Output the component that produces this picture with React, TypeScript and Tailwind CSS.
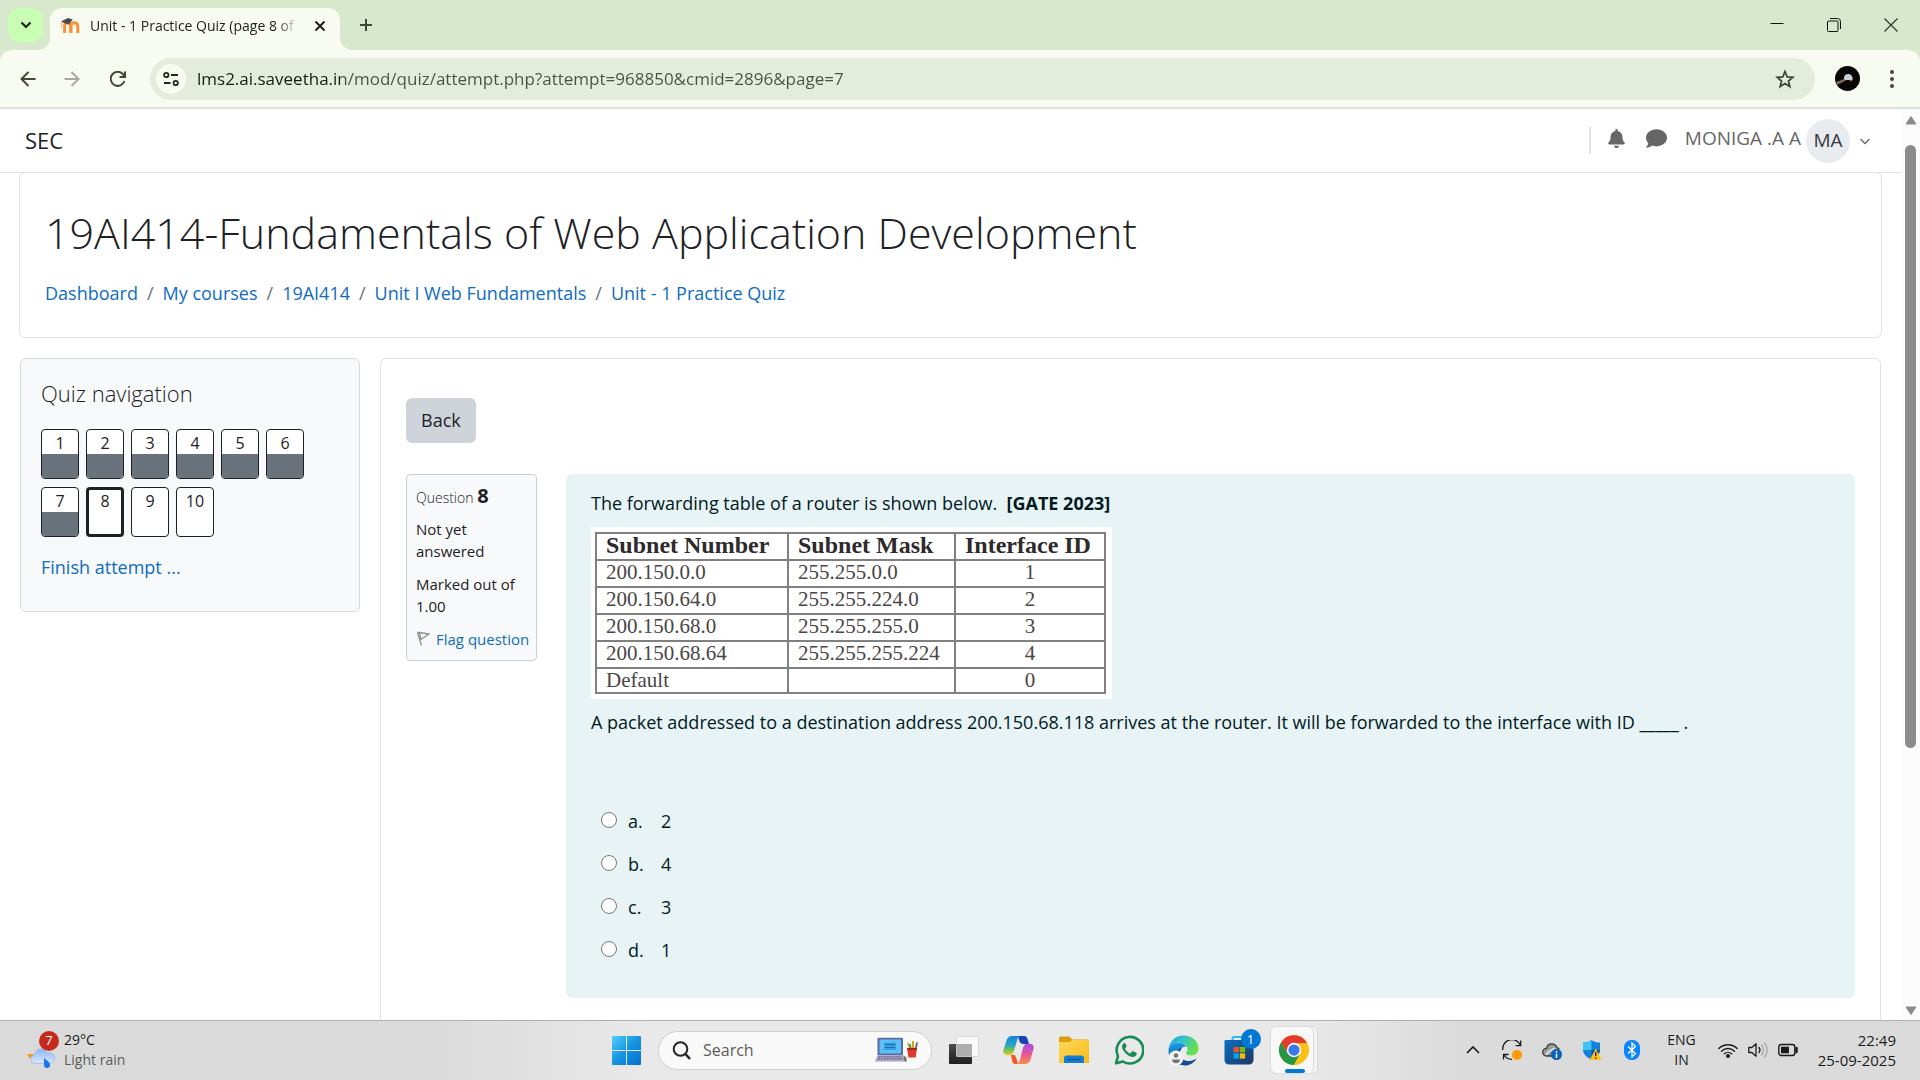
import React, { useState } from "react";
import { FaBell, FaComment } from "react-icons/fa";

const crumbs = ["Dashboard", "My courses", "19AI414", "Unit I Web Fundamentals", "Unit - 1 Practice Quiz"];

const questions = Array.from({ length: 10 }, (_, i) => ({ n: i + 1, saved: i < 7, current: i === 7 }));

const routes = [
  ["200.150.0.0", "255.255.0.0", "1"],
  ["200.150.64.0", "255.255.224.0", "2"],
  ["200.150.68.0", "255.255.255.0", "3"],
  ["200.150.68.64", "255.255.255.224", "4"],
  ["Default", "", "0"],
];

const answers = [
  ["a", "2"],
  ["b", "4"],
  ["c", "3"],
  ["d", "1"],
];

function MoodleIcon() {
  return (
    <svg className="h-5 w-5 shrink-0" viewBox="0 0 20 20">
      <path d="M4.600 17V10c0-2.200 1.200-3.200 3-3.200s3 1 3 3.200v7M11 17v-7c0-2.200 1.400-3.200 3.200-3.200s3.600 1 3.600 3.200v7" fill="none" stroke="#fa9136" strokeWidth="3" />
      <path d="M1 5.400 7.800 2l5 1.600L8.600 8.400 5 7.200z" fill="#4a4a48" />
      <path d="M1.600 5.600v6" stroke="#f3b27a" strokeWidth="1" />
    </svg>
  );
}

function TabStrip() {
  return (
    <div className="flex h-[50px] shrink-0 items-start bg-[#d8e8cc] pl-2">
      <button aria-label="Search tabs" className="mt-2 flex h-[34px] w-[35px] items-center justify-center rounded-xl bg-[#c8ffb4] text-[#182612]">
        <svg className="h-3 w-3" viewBox="0 0 12 12" fill="none" stroke="currentColor" strokeWidth="2.200"><path d="M1.500 3.500 6 8l4.500-4.500" /></svg>
      </button>
      <div className="relative ml-[7px] mt-2 flex h-[42px] w-[290px] items-center rounded-t-xl bg-[#f8fbf1] pb-[7px] pl-[10px] pr-[10px]">
        <svg className="absolute -left-3 bottom-0 h-3 w-3" viewBox="0 0 12 12"><path d="M12 0v12H0A12 12 0 0 0 12 0" fill="#f8fbf1" /></svg>
        <svg className="absolute -right-3 bottom-0 h-3 w-3" viewBox="0 0 12 12"><path d="M0 0v12h12A12 12 0 0 1 0 0" fill="#f8fbf1" /></svg>
        <MoodleIcon />
        <span className="ml-[10px] min-w-0 flex-1 whitespace-nowrap text-sm text-[#1c2118] [mask-image:linear-gradient(to_right,black_90%,transparent_100%)]">
          Unit - 1 Practice Quiz (page 8 of
        </span>
        <button aria-label="Close tab" className="ml-3 flex h-6 w-5 items-center justify-center text-[#1c2118]">
          <svg className="h-3 w-3" viewBox="0 0 12 12" stroke="currentColor" strokeWidth="2"><path d="m1.500 1.500 9 9M10.500 1.500l-9 9" /></svg>
        </button>
      </div>
      <button aria-label="New tab" className="ml-3 mt-2 flex h-[34px] w-7 items-center justify-center text-[#3c4a37]">
        <svg className="h-[14px] w-[14px]" viewBox="0 0 14 14" stroke="currentColor" strokeWidth="2"><path d="M7 1v12M1 7h12" /></svg>
      </button>
      <div className="ml-auto flex h-[50px]">
        <button aria-label="Minimize" className="flex w-[57px] items-center justify-center pb-1">
          <svg className="h-[14px] w-[14px]" viewBox="0 0 14 14" stroke="#111"><path d="M.5 7.500h13" /></svg>
        </button>
        <button aria-label="Restore" className="flex w-[57px] items-center justify-center pb-px">
          <svg className="h-[14px] w-[14px]" viewBox="0 0 14 14" fill="none" stroke="#111"><rect x=".5" y="3" width="10.500" height="10.500" rx="1" /><path d="M3 .5h7.500a3 3 0 0 1 3 3V11" /></svg>
        </button>
        <button aria-label="Close window" className="flex w-[58px] items-center justify-center">
          <svg className="h-[14px] w-[14px]" viewBox="0 0 14 14" stroke="#333" strokeWidth="1.200"><path d="m.5.5 13 13M13.500.5l-13 13" /></svg>
        </button>
      </div>
    </div>
  );
}

function Toolbar() {
  return (
    <div className="shrink-0 bg-[#d8e8cc]">
      <div className="flex h-[59px] items-center rounded-t-xl border-b-2 border-[#dfe2d6] bg-[#f8fbf1]">
        <button aria-label="Back one page" className="ml-4 flex h-8 w-6 items-center justify-center text-[#3c4a37]">
          <svg className="h-4 w-4" viewBox="0 0 16 16" fill="none" stroke="currentColor" strokeWidth="2"><path d="M15.500 8H2M8.500 1 1.500 8l7 7" /></svg>
        </button>
        <button aria-label="Forward" className="ml-5 flex h-8 w-6 items-center justify-center text-[#a5ab9f]">
          <svg className="h-4 w-4" viewBox="0 0 16 16" fill="none" stroke="currentColor" strokeWidth="2"><path d="M.5 8H14M7.500 1l7 7-7 7" /></svg>
        </button>
        <button aria-label="Reload" className="ml-[22px] flex h-8 w-6 items-center justify-center text-[#3c4a37]">
          <svg className="h-4 w-4" viewBox="0 0 16 16" fill="none" stroke="currentColor" strokeWidth="2"><path d="M14.400 10A7 7 0 1 1 12.800 3L14.500 5" /><path d="M15 .5v5.500H9.500" /></svg>
        </button>
        <div className="ml-[20px] flex h-[42px] min-w-0 flex-1 items-center rounded-full bg-[#e4eddb] pl-[6px] pr-5">
          <button aria-label="View site information" className="flex h-[30px] w-[30px] shrink-0 items-center justify-center rounded-full bg-[#f8fbf1]">
            <svg className="h-4 w-4" viewBox="0 0 16 16" fill="none" stroke="#1f2a1b" strokeWidth="1.800"><circle cx="3.300" cy="4" r="2.200" /><path d="M8 4h7M1 12h6.500" /><circle cx="12.700" cy="12" r="2.200" /></svg>
          </button>
          <input
            aria-label="Address"
            defaultValue="lms2.ai.saveetha.in/mod/quiz/attempt.php?attempt=968850&cmid=2896&page=7"
            className="ml-[11px] min-w-0 flex-1 bg-[linear-gradient(to_right,#171c14_143px,#485244_143px)] bg-clip-text pt-px text-[17px] text-transparent caret-black outline-none"
          />
          <button aria-label="Bookmark this tab" className="text-[#3c4a37]">
            <svg className="h-5 w-5" viewBox="0 0 20 20" fill="none" stroke="currentColor" strokeWidth="1.800"><path d="m10 2.500 2.200 5.300 5.600.5-4.300 3.700 1.300 5.500L10 14.600l-4.800 2.900 1.300-5.500-4.300-3.700 5.600-.5z" /></svg>
          </button>
        </div>
        <button aria-label="Profile" className="ml-5">
          <svg className="h-[25px] w-[25px]" viewBox="0 0 25 25"><circle cx="12.500" cy="12.500" r="12.500" fill="#080606" /><path d="M9 14c-.5-3 .8-6 4-6s5 2.500 4.500 6z" fill="#c9d0d8" /><path d="m1 16 8-3 2 1.500L2 19z" fill="#7c6857" /><path d="M14 14h3.500l-1 2z" fill="#a8442d" /></svg>
        </button>
        <button aria-label="Browser menu" className="ml-5 mr-4 flex h-8 w-6 items-center justify-center">
          <svg className="h-5 w-1" viewBox="0 0 4 20" fill="#3c4a37"><circle cx="2" cy="3" r="2" /><circle cx="2" cy="10" r="2" /><circle cx="2" cy="17" r="2" /></svg>
        </button>
      </div>
    </div>
  );
}

function SiteNav() {
  return (
    <nav className="flex h-16 shrink-0 items-center border-b border-[#dee2e6] pl-[25px] pr-[31px]">
      <a href="#" className="text-[22px] text-[#1d2125]">SEC</a>
      <div className="ml-auto flex items-center text-[#666]">
        <div className="h-[27px] w-[2px] bg-[#dee2e6]" />
        <button aria-label="Notifications" className="ml-4 pb-1 text-[19px]"><FaBell /></button>
        <button aria-label="Messages" className="ml-5 pb-1 text-[21px]"><FaComment /></button>
        <button className="ml-[18px] flex items-center">
          <span className="pb-1 text-[19px]">MONIGA .A A</span>
          <span className="ml-[5px] flex h-11 w-11 items-center justify-center rounded-full bg-[#e9ecef] text-[19px] text-[#343a40]">MA</span>
          <svg className="ml-[10px] h-[10px] w-[10px]" viewBox="0 0 10 10" fill="none" stroke="currentColor" strokeWidth="1.300"><path d="m.5 3 4.500 4.500L9.500 3" /></svg>
        </button>
      </div>
    </nav>
  );
}

function CourseHeader() {
  return (
    <header className="mx-[19px] -mt-px shrink-0 rounded-md border border-[#dee2e6] px-[25px] pb-[30px] pt-8">
      <h1 className="whitespace-nowrap text-[43px] font-light leading-[56px] text-[#1d2125]">
        19AI414-Fundamentals of Web Application Development
      </h1>
      <ol className="mt-[18px] flex text-lg leading-7">
        {crumbs.map((c, i) => (
          <li key={c} className="flex">
            {i > 0 && <span className="px-[9px] text-[#6a737b]">/</span>}
            <a href="#" className="text-[#0f6cbf]">{c}</a>
          </li>
        ))}
      </ol>
    </header>
  );
}

function QuizNavigation() {
  return (
    <aside className="h-[254px] w-[340px] shrink-0 rounded-md border border-[#d8dade] bg-[#f8f9fa] px-5 pt-[18px]">
      <h2 className="text-[22px] font-light leading-8 text-[#1d2125]">Quiz navigation</h2>
      <div className="mt-5 flex flex-wrap gap-x-[7px] gap-y-2">
        {questions.map((q) => (
          <a
            key={q.n}
            href="#"
            className={
              "flex h-[50px] w-[38px] flex-col overflow-hidden rounded border-[#1d2125] bg-white text-center text-base leading-[24px] text-[#1d2125] " +
              (q.current ? "border-[3px]" : "border")
            }
          >
            <span className={q.current ? "h-[22px] leading-[22px]" : "h-6 pt-px"}>{q.n}</span>
            {q.saved && <span className="flex-1 bg-[#6a737b]" />}
          </a>
        ))}
      </div>
      <a href="#" className="mt-[16px] block text-lg leading-7 text-[#0f6cbf]">Finish attempt ...</a>
    </aside>
  );
}

function QuestionInfo() {
  return (
    <div className="h-[187px] w-[131px] shrink-0 rounded-sm border border-[#cad0d7] bg-[#f8f9fa] px-[9px] pt-[7px] text-[15px] leading-[22px] text-[#1d2125]">
      <h3 className="text-sm font-light leading-[26px]">Question <span className="text-xl font-bold">8</span></h3>
      <p className="mt-[7px]">Not yet<br />answered</p>
      <p className="mt-[11px]">Marked out of 1.00</p>
      <a href="#" className="mt-[11px] flex items-center whitespace-nowrap text-[#0f6cbf]">
        <svg className="mr-[6px] h-4 w-[14px] shrink-0" viewBox="0 0 14 16" fill="none" stroke="#8a8f94" strokeWidth="1.300"><path d="m1.500 1.500 4 13M3.500 1.500 12.800 3 5 8.500M3.500 1.500 5 8.500M1.500 1.500h3" /></svg>
        Flag question
      </a>
    </div>
  );
}

function RoutingTable() {
  return (
    <div className="h-[172px] w-[521px] bg-white pl-1 pr-[6px] pt-[5px]">
      <table className="w-full table-fixed border-collapse border-2 border-[#808080] font-['Liberation_Serif',serif] text-[21px] leading-[22px] text-[#4a4546]">
        <colgroup>
          <col className="w-[192px]" />
          <col className="w-[167px]" />
          <col />
        </colgroup>
        <thead>
          <tr className="h-[27px]">
            {["Subnet Number", "Subnet Mask", "Interface ID"].map((h) => (
              <th key={h} className="whitespace-nowrap border-2 border-[#808080] px-[9px] text-left align-top text-2xl/[22px] font-bold text-[#2f2a2b]">{h}</th>
            ))}
          </tr>
        </thead>
        <tbody className="align-top">
          {routes.map((r) => (
            <tr key={r[0]} className="h-[27px] last:h-[25px]">
              <td className="border-2 border-[#808080] px-[9px]">{r[0]}</td>
              <td className="border-2 border-[#808080] px-[9px]">{r[1]}</td>
              <td className="border-2 border-[#808080] text-center">{r[2]}</td>
            </tr>
          ))}
        </tbody>
      </table>
    </div>
  );
}

function QuestionBody() {
  const [picked, setPicked] = useState("");
  return (
    <div className="h-[524px] min-w-0 flex-1 rounded-md bg-[#e7f3f5] px-[25px] pt-[15px] text-lg leading-7 text-[#001a1e]">
      <p>The forwarding table of a router is shown below.&nbsp; <strong className="font-bold">[GATE 2023]</strong></p>
      <div className="mt-[10px]"><RoutingTable /></div>
      <p className="mt-[9px]">A packet addressed to a destination address 200.150.68.118 arrives at the router. It will be forwarded to the interface with ID _____ .</p>
      <fieldset className="mt-[71px] flex flex-col gap-[15px] pl-[10px]">
        {answers.map(([letter, text]) => (
          <label key={letter} className="flex items-center">
            <input
              type="radio"
              name="answer"
              value={text}
              checked={picked === letter}
              onChange={() => setPicked(letter)}
              className="mb-[2px] h-4 w-4 appearance-none rounded-full border border-[#767676] bg-white checked:border-4 checked:border-[#0f6cbf]"
            />
            <span className="ml-[11px] w-[33px]">{letter}.</span>
            <span>{text}</span>
          </label>
        ))}
      </fieldset>
    </div>
  );
}

function Scrollbar() {
  return (
    <div className="flex w-[19px] shrink-0 flex-col items-center bg-[#fcfcfc] pb-[4px] pt-[6px]">
      <svg className="h-[10px] w-3" viewBox="0 0 12 10"><path d="M6 1.500 11 9H1z" fill="#8b8b8b" stroke="#8b8b8b" strokeLinejoin="round" /></svg>
      <div className="flex w-full flex-1 flex-col items-center pt-5">
        <div className="h-[70%] w-[11px] rounded-full bg-[#8b8b8b]" />
      </div>
      <svg className="h-[10px] w-3" viewBox="0 0 12 10"><path d="M6 8.500 1 1h10z" fill="#8b8b8b" stroke="#8b8b8b" strokeLinejoin="round" /></svg>
    </div>
  );
}

function StartIcon() {
  return (
    <svg className="h-[29px] w-[29px]" viewBox="0 0 29 29">
      <defs><linearGradient id="win" x1="0" y1="0" x2="1" y2="1"><stop offset="0" stopColor="#4fd0fb" /><stop offset=".5" stopColor="#1593e0" /><stop offset="1" stopColor="#0170d0" /></linearGradient></defs>
      <path d="M1 0h13v14H0V1a1 1 0 0 1 1-1M15 0h13a1 1 0 0 1 1 1v13H15zM0 15h14v14H1a1 1 0 0 1-1-1zM15 15h14v13a1 1 0 0 1-1 1H15z" fill="url(#win)" />
    </svg>
  );
}

function LaptopIcon() {
  return (
    <svg className="h-[26px] w-[44px]" viewBox="0 0 44 26">
      <rect x="2.500" y=".8" width="25.500" height="17.500" rx="1" fill="#5c6a9c" />
      <rect x="4.500" y="2.500" width="21.500" height="14" fill="#5cc0f5" />
      <rect x="9" y="5.500" width="12" height="7.500" fill="#3aa0e4" />
      <path d="M10 7.500h10M10 10.500h10" stroke="#1d6cba" />
      <path d="M2.500 18.300H28l3.500 6.200H0z" fill="#a9a4c3" />
      <path d="M3.500 19.800h23M3 21.800h25" stroke="#655f88" strokeWidth="1" strokeDasharray="2 .8" />
      <path d="m28.500 18 3 3v4l-2-1z" fill="#806a55" />
      <path d="m35 12-2-6M38 12V4M40 12l2.500-7" stroke="#d9a227" strokeWidth="2" />
      <path d="m36 12-1-5" stroke="#2e9a5c" strokeWidth="1.500" /><path d="m41 12 1-6" stroke="#3372c4" strokeWidth="1.500" />
      <path d="M32 11h10l-1.300 9.500h-7.200z" fill="#dc3a2c" /><path d="M32 11h10l-.3 2h-9.300z" fill="#a82218" />
    </svg>
  );
}

function TaskViewIcon() {
  return (
    <svg className="h-[30px] w-[30px]" viewBox="0 0 30 30">
      <defs><linearGradient id="tv" x1="0" y1="0" x2="0" y2="1"><stop offset="0" stopColor="#4c4c4c" /><stop offset="1" stopColor="#1e1e1e" /></linearGradient></defs>
      <rect x="0" y="9" width="23" height="20" rx="1" fill="url(#tv)" />
      <rect x="7.500" y="1.500" width="22" height="20" rx="1" fill="#fff" fillOpacity=".72" stroke="#d8d8d8" />
      <path d="M7.500 9H23v12.500H7.500z" fill="#aeaeae" />
    </svg>
  );
}

function CopilotIcon() {
  return (
    <svg className="h-[30px] w-[31px]" viewBox="0 0 31 30">
      <defs>
        <linearGradient id="cpa" x1="0" y1="0" x2="0" y2="1"><stop offset="0" stopColor="#1c7fe0" /><stop offset=".45" stopColor="#22a6c8" /><stop offset=".75" stopColor="#7cc254" /><stop offset="1" stopColor="#f2cb25" /></linearGradient>
        <linearGradient id="cpb" x1="0" y1="0" x2="0" y2="1"><stop offset="0" stopColor="#a452e8" /><stop offset=".5" stopColor="#e6559c" /><stop offset="1" stopColor="#fb8b3c" /></linearGradient>
      </defs>
      <path d="M15 1h6c2.300 0 3 1.500 3.600 3.500L26 9h-5c-3 0-4-1-5-4z" fill="#1643b8" />
      <path d="M8 20H12l2 5c1 3 0 4 3 4h-4c-3 0-3.500-2-4.200-4.500z" fill="#f05a2a" />
      <path d="M9.500 1H18c-2.500 0-3.200 2-4 4.500l-3 10.500c-.9 3-2 4.200-5 4.200H4c-3.500 0-4.300-2.700-3.300-6L3.400 6C4.500 2.500 6 1 9.500 1z" fill="url(#cpa)" />
      <path d="M21.500 29H13c2.500 0 3.200-2 4-4.500L20 13c.9-3 2-4.200 5-4.200h2c3.500 0 4.300 2.700 3.300 6L27.600 24c-1.100 3.500-2.600 5-6.100 5z" fill="url(#cpb)" />
    </svg>
  );
}

function FolderIcon() {
  return (
    <svg className="h-[28px] w-[30px]" viewBox="0 0 30 28">
      <defs><linearGradient id="fo" x1="0" y1="0" x2="1" y2="1"><stop offset="0" stopColor="#ffd75e" /><stop offset="1" stopColor="#f9bb17" /></linearGradient></defs>
      <path d="M0 2a1.500 1.500 0 0 1 1.500-1.500h9L13 3.500h15.500A1.500 1.500 0 0 1 30 5v5H0z" fill="#dc9d08" />
      <path d="M0 6h10.500l3-2H29a1 1 0 0 1 1 1v22H0z" fill="url(#fo)" />
      <path d="M5 27v-5a2.500 2.500 0 0 1 2.500-2.500h15A2.500 2.500 0 0 1 25 22v5z" fill="#1180d4" /><path d="M9 23.500h12" stroke="#0b4f95" strokeWidth="1.400" strokeLinecap="round" />
    </svg>
  );
}

function WhatsAppIcon() {
  return (
    <svg className="h-[30px] w-[30px]" viewBox="0 0 30 30">
      <path d="M2 28.300 4 21A13.300 13.300 0 1 1 9 26.500z" fill="none" stroke="#178a55" strokeWidth="2.600" strokeLinejoin="round" />
      <path d="M10.600 8c-.8 0-2.600 1.400-2.600 3.800 0 2.500 2 5 4 6.900 2 1.800 4.500 3.300 6.800 3.300 2 0 3.700-1.300 3.900-2.900.1-.8 0-1-.5-1.300l-3-1.500c-.6-.3-1-.1-1.300.3l-1.200 1.500c-.3.400-.7.400-1.200.1-1.800-.9-3.300-2.200-4.200-4-.3-.5-.2-.8.1-1.100l1-1.300c.3-.4.300-.7.100-1.200l-1.100-2.200c-.2-.4-.5-.4-.8-.4z" fill="#178a55" />
    </svg>
  );
}

function EdgeIcon() {
  return (
    <svg className="h-[31px] w-[31px]" viewBox="0 0 31 31">
      <defs>
        <linearGradient id="ea" x1="0" y1="0" x2="1" y2=".4"><stop offset="0" stopColor="#1ba7e0" /><stop offset=".5" stopColor="#35c1c9" /><stop offset="1" stopColor="#6be04a" /></linearGradient>
        <linearGradient id="eb" x1="0" y1="0" x2="0" y2="1"><stop offset="0" stopColor="#1c9be6" /><stop offset="1" stopColor="#0d57a6" /></linearGradient>
      </defs>
      <path d="M.5 15C1 6.500 7.500.5 15.500.5 24 .5 30.500 6 30.500 13c0 5-3.500 7.500-7.500 7.500-3.300 0-5-1.200-5-2.500 0-.8 1.500-1.300 1.500-4C19.500 10.500 15 7.500 10 7.500 5 7.500 1.500 11 .5 15z" fill="url(#ea)" />
      <path d="M.5 15C1.500 10.500 5 7.800 10 7.800c4.500 0 7.300 1.700 8.500 4.200-2-.8-6.500 0-6.500 6.500 0 6 5 9 10 9-2 1.500-4 2.500-7 2.500C7 30 0 23.500.5 15z" fill="url(#eb)" />
      <path d="M12 18c0 6.500 6 8.500 10 8 3.500-.4 5.500-2 6.500-2.500-2 4-7 7.500-12.500 7-5-1-8.500-6-8-11 .3-3.500 3-6.500 6-7-1.500 1.500-2 3.500-2 5.500z" fill="#124f97" />
      <circle cx="8" cy="23" r="7.500" fill="#f4f4f4" /><circle cx="8" cy="20.500" r="2.300" fill="#767676" /><path d="M4 24.500h8c0 2.500-1.500 3.800-4 3.800s-4-1.300-4-3.800z" fill="#767676" />
    </svg>
  );
}

function StoreIcon() {
  return (
    <div className="relative">
      <svg className="h-[30px] w-[30px]" viewBox="0 0 30 30">
        <defs><linearGradient id="st" x1="0" y1="0" x2="1" y2="1"><stop offset="0" stopColor="#0a6fc4" /><stop offset="1" stopColor="#1f3560" /></linearGradient></defs>
        <path d="M8.500 8V3.500c0-1 .5-1.500 1.500-1.500h10c1 0 1.500.5 1.500 1.500V8" fill="none" stroke="#2cb9f2" strokeWidth="2" />
        <path d="M1.500 5h27c.5 0 1 .5 1 1v19a4.500 4.500 0 0 1-4.500 4.500H5A4.500 4.500 0 0 1 .5 25V6c0-.5.500-1 1-1z" fill="url(#st)" />
        <path d="M9.500 12h5.300v5.300H9.500z" fill="#f25022" /><path d="M15.800 12h5.300v5.300h-5.300z" fill="#7fba00" /><path d="M9.500 18.300h5.300v5.300H9.500z" fill="#00a4ef" /><path d="M15.800 18.300h5.300v5.300h-5.300z" fill="#ffb900" />
      </svg>
      <span className="absolute -right-[7px] -top-[6px] flex h-5 w-5 items-center justify-center rounded-full bg-[#0078d4] text-[13px] text-white">1</span>
    </div>
  );
}

function ChromeIcon() {
  return (
    <svg className="h-[30px] w-[30px]" viewBox="0 0 48 48">
      <circle cx="24" cy="24" r="24" fill="#fbc116" />
      <path d="M24 13h20.800A24 24 0 0 0 3.200 12L14.500 29.500z" fill="#e33b2e" />
      <path d="M3.200 12A24 24 0 0 0 24 48l10-18-10 5-10-5.500z" fill="#269547" />
      <path d="M44.800 13A24 24 0 0 1 24 48l9.600-18.500L33 13z" fill="#fbc116" />
      <circle cx="24" cy="24" r="11.500" fill="#fff" /><circle cx="24" cy="24" r="9" fill="#3a79ea" />
    </svg>
  );
}

function AppButton({ label, children }: { label: string; children: React.ReactNode }) {
  return <button aria-label={label} className="flex h-12 w-[55px] items-center justify-center">{children}</button>;
}

function Taskbar() {
  return (
    <footer className="flex h-[60px] shrink-0 items-center border-t border-[#b0b1b0] bg-[linear-gradient(to_right,#d9dad9_0%,#d9dad9_22%,#e9e9e9_34%,#e9e9e9_68%,#dbdbdb_76%,#dadada_100%)] pb-px text-sm">
      <div className="flex flex-1 basis-0 items-center pl-[27px]">
        <button className="flex items-center text-left">
          <span className="relative block h-[39px] w-[32px]">
            <svg className="absolute left-0 top-4 h-6 w-[30px]" viewBox="0 0 30 24">
              <defs><linearGradient id="cl" x1="0" y1="0" x2="0" y2="1"><stop offset="0" stopColor="#8bb6f8" /><stop offset="1" stopColor="#dbe8fc" /></linearGradient></defs>
              <path d="M0 7h7l-4 5z" fill="#f39a1d" />
              <path d="M8.500 16.500a4.500 4.500 0 0 1-.5-9C8.500 4 11 2 14 2s5 1.500 6 4c4.500-1 7.500 1.500 7.500 5s-2 5.500-5.500 5.500z" fill="url(#cl)" stroke="#86aff0" strokeWidth=".6" />
              <path d="M17 11c3 2.500 6 4 6 7a3 3 0 0 1-6 0z" fill="#1677ee" />
            </svg>
            <span className="absolute right-0 top-0 flex h-5 w-5 items-center justify-center rounded-full bg-[#c42b1c] text-[13px] text-white">7</span>
          </span>
          <span className="ml-[5px] leading-5 text-[#1b1b1b]">29°C<br /><span className="text-[#5c5c5c]">Light rain</span></span>
        </button>
      </div>
      <div className="flex items-center">
        <button aria-label="Start" className="mr-2 flex h-12 w-12 items-center justify-center"><StartIcon /></button>
        <label className="mr-1 flex h-[39px] w-[274px] items-center rounded-full border border-[#cfcfcf] bg-[#f9f9f9] pl-[13px] pr-3">
          <svg className="h-[19px] w-[19px]" viewBox="0 0 19 19" fill="none" stroke="#242424" strokeWidth="2"><circle cx="8.500" cy="8" r="6.800" /><path d="m13.500 13 4.500 5" strokeWidth="2.600" /></svg>
          <input placeholder="Search" aria-label="Search" className="ml-3 w-0 min-w-0 flex-1 text-base outline-none placeholder:text-[#5c5c5c]" />
          <LaptopIcon />
        </label>
        <AppButton label="Task view"><TaskViewIcon /></AppButton>
        <AppButton label="Copilot"><CopilotIcon /></AppButton>
        <AppButton label="File Explorer"><FolderIcon /></AppButton>
        <AppButton label="WhatsApp"><WhatsAppIcon /></AppButton>
        <AppButton label="Edge"><EdgeIcon /></AppButton>
        <AppButton label="Store"><StoreIcon /></AppButton>
        <AppButton label="Chrome">
          <span className="relative flex h-12 w-12 items-center justify-center rounded-md border border-[#dcdcdc] bg-[#f4f4f4]">
            <span className="absolute inset-y-0 left-0 w-[43px] rounded-md border-r border-[#d9d9d9] bg-[#f8f8f8]" />
            <span className="relative"><ChromeIcon /></span>
            <span className="absolute bottom-0 left-[14px] h-1 w-5 rounded-full bg-[#0078d4]" />
          </span>
        </AppButton>
      </div>
      <div className="flex flex-1 basis-0 items-center justify-end pr-6 text-[#1b1b1b]">
        <button aria-label="Show hidden icons" className="mr-[22px]"><svg className="h-[14px] w-[14px]" viewBox="0 0 14 14" fill="none" stroke="currentColor" strokeWidth="1.600"><path d="m1 10 6-6 6 6" /></svg></button>
        <button aria-label="Updates" className="mr-5">
          <svg className="h-5 w-5" viewBox="0 0 20 20" fill="none" stroke="#1b1b1b" strokeWidth="1.300"><path d="M.8 10A9.200 9.200 0 0 1 18.500 5.500M18.700.5v5.200h-5M1.500 19.500V14.500h5M2 15a9.200 9.200 0 0 0 8 4.300" /><circle cx="15" cy="15" r="5" fill="#ff9908" stroke="none" /></svg>
        </button>
        <button aria-label="OneDrive" className="mr-5">
          <svg className="h-5 w-5" viewBox="0 0 20 20"><path d="M4.500 16a3.800 3.800 0 0 1 0-7.600C5 5.500 7 3.800 9.800 3.800c2.500 0 4.200 1.200 5 3.400L17 9l-4 7z" fill="#9a9a9a" stroke="#3a3a3a" strokeWidth="1.300" /><path d="M4.500 15c0-4 5-3.500 8-7" stroke="#ddd" strokeWidth="2" fill="none" /><circle cx="14.500" cy="14.500" r="5.500" fill="#0a62b8" /><path d="M14.500 13.500V18M14.500 11v1.500" stroke="#fff" strokeWidth="1.500" /></svg>
        </button>
        <button aria-label="Security" className="mr-5">
          <svg className="h-5 w-5" viewBox="0 0 20 20"><path d="M9.500 0c2.500 1.800 5 2.500 8.500 2.600V9c0 5-3 8-8.500 10.500C4 17 1 14 1 9V2.600C4.500 2.500 7 1.800 9.500 0z" fill="#1180d8" /><path d="M9.500 0v10H1V2.600C4.500 2.500 7 1.800 9.500 0z" fill="#3cc4f4" /><path d="M9.500 10H18c-.5 4.500-3.500 7.500-8.500 9.500z" fill="#0a4d9c" /><path d="m13.700 8.500 6 11.500h-12z" fill="#ffc20e" /><path d="M13.700 12v4M13.700 17.300v1.400" stroke="#222" strokeWidth="1.400" /></svg>
        </button>
        <button aria-label="Bluetooth" className="mr-[25px]">
          <svg className="h-5 w-5" viewBox="0 0 20 20"><rect x="2" width="16" height="20" rx="7.500" fill="#0a84ff" /><path d="m6 6.500 7.500 7L10 17V3l3.500 3.500L6 13.500" fill="none" stroke="#fff" strokeWidth="1.300" /></svg>
        </button>
        <button className="mr-[22px] text-center leading-5">ENG<br />IN</button>
        <button aria-label="Network, sound and battery" className="mr-5 flex items-center gap-[10px]">
          <svg className="h-5 w-5" viewBox="0 0 20 20" fill="none" stroke="#1b1b1b" strokeWidth="1.400" strokeLinecap="round"><path d="M.8 8.500a13 13 0 0 1 18.400 0M3.600 11.200a9 9 0 0 1 12.800 0M6.400 13.800a5.200 5.200 0 0 1 7.200 0" /><circle cx="10" cy="16" r="1.300" fill="#1b1b1b" /></svg>
          <svg className="h-5 w-5" viewBox="0 0 20 20" fill="none" stroke="#1b1b1b" strokeWidth="1.300" strokeLinecap="round"><path d="M.8 7.500h3L8 3.800v12.400L3.800 12.500h-3z" strokeLinejoin="round" /><path d="M11 7.500a4 4 0 0 1 0 5" /><path d="M13.500 5a7.500 7.500 0 0 1 0 10M16.500 3a10.500 10.500 0 0 1 0 14" stroke="#a8a8a8" /></svg>
          <svg className="h-5 w-5" viewBox="0 0 20 20" fill="none" stroke="#1b1b1b" strokeWidth="1.400"><rect x=".8" y="4.500" width="16" height="11" rx="2.500" /><rect x="3" y="6.700" width="8" height="6.600" fill="#1b1b1b" stroke="none" /><path d="M18.500 8v4" strokeWidth="2.500" strokeLinecap="round" /></svg>
        </button>
        <button className="text-right text-[15px] leading-5">22:49<br />25-09-2025</button>
      </div>
    </footer>
  );
}

export default function App() {
  return (
    <div className="flex h-screen flex-col overflow-hidden bg-white font-['Open_Sans','Noto_Sans',sans-serif]">
      <TabStrip />
      <Toolbar />
      <div className="flex min-h-0 flex-1">
        <div className="flex min-w-0 flex-1 flex-col overflow-hidden">
          <SiteNav />
          <CourseHeader />
          <div className="mx-5 mt-5 flex min-h-0 flex-1 items-start gap-5 overflow-hidden">
            <QuizNavigation />
            <main className="h-full min-w-0 flex-1 rounded-t-md border border-b-0 border-[#dee2e6] px-[25px] pt-[39px]">
              <button className="h-[45px] rounded-md bg-[#ced4da] px-[15px] pb-px text-lg text-[#1d2125]">Back</button>
              <div className="mt-[31px] flex items-start gap-[29px]">
                <QuestionInfo />
                <QuestionBody />
              </div>
            </main>
          </div>
        </div>
        <Scrollbar />
      </div>
      <Taskbar />
    </div>
  );
}
